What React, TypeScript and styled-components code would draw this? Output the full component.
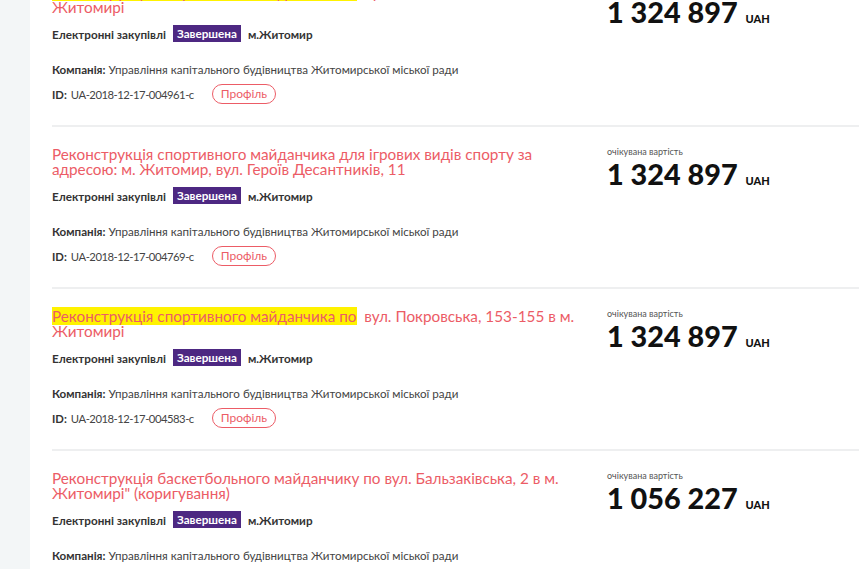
import React from "react";
import styled, { createGlobalStyle } from "styled-components";

const Global = createGlobalStyle`
  html, body { margin: 0; padding: 0; background: #ffffff; overflow: hidden; }
  body { font-family: Lato, "Open Sans", Arial, sans-serif; color: #333; }
`;

const Page = styled.div`
  display: flex;
  height: 569px;
  overflow: hidden;
`;

const Side = styled.div`
  width: 30px;
  flex: none;
  background: #f3f6f7;
`;

const Main = styled.div`
  flex: 1;
  background: #fff;
  padding-left: 22px;
`;

const List = styled.div`
  margin-top: -35px;
`;

const Card = styled.div`
  display: flex;
  border-bottom: 2px solid #eeeff0;
  padding: 20px 0 21px;
`;

const Left = styled.div`
  width: 533px;
  flex: none;
  display: flex;
  flex-direction: column;
`;

const Title = styled.a`
  font-size: 15.3px;
  line-height: 15px;
  color: #ec5c66;
  text-decoration: none;
  white-space: pre-wrap;
`;

const Mark = styled.span`
  background: #fff200;
`;

const Meta = styled.div`
  display: flex;
  align-items: center;
  gap: 7px;
  margin-top: 10px;
  height: 17px;
  font-size: 11.7px;
  font-weight: 700;
  color: #333;
`;

const Badge = styled.span`
  background: #4d2882;
  color: #fff;
  height: 17px;
  line-height: 17px;
  padding: 0 4px;
`;

const Company = styled.div`
  margin-top: 21px;
  font-size: 11.6px;
  line-height: 14px;
  color: #444;
  b { color: #333; }
`;

const IdRow = styled.div`
  display: flex;
  align-items: center;
  margin-top: 7px;
  height: 20px;
  font-size: 11.3px;
  color: #444;
  b { color: #333; margin-right: 4px; }
`;

const IdValue = styled.span`
  letter-spacing: -0.5px;
`;

const Pill = styled.span`
  margin-left: 18px;
  height: 18px;
  line-height: 18px;
  padding: 0 8px;
  border: 1px solid #ec5c66;
  border-radius: 10px;
  color: #ec5c66;
  font-size: 12px;
`;

const Right = styled.div`
  margin-left: 22px;
  display: flex;
  flex-direction: column;
`;

const Label = styled.div`
  font-size: 9px;
  line-height: 12px;
  color: #555;
  margin-top: -1px;
`;

const Price = styled.div`
  margin-top: 1px;
  display: flex;
  align-items: baseline;
  gap: 8px;
  line-height: 30px;
`;

const Amount = styled.span`
  font-size: 28.8px;
  font-weight: 900;
  color: #111;
`;

const Cur = styled.span`
  font-size: 11px;
  font-weight: 900;
  color: #111;
`;

type Item = {
  mark?: string;
  title: string;
  id: string;
  price: string;
};

const items: Item[] = [
  {
    mark: "Реконструкція спортивного майданчика по",
    title: "  вул. Космонавтів, 14 в м. Житомирі",
    id: "UA-2018-12-17-004961-c",
    price: "1 324 897",
  },
  {
    title:
      "Реконструкція спортивного майданчика для ігрових видів спорту за адресою: м. Житомир, вул. Героїв Десантників, 11",
    id: "UA-2018-12-17-004769-c",
    price: "1 324 897",
  },
  {
    mark: "Реконструкція спортивного майданчика по",
    title: "  вул. Покровська, 153-155 в м. Житомирі",
    id: "UA-2018-12-17-004583-c",
    price: "1 324 897",
  },
  {
    title:
      "Реконструкція баскетбольного майданчику по вул. Бальзаківська, 2 в м. Житомирі\" (коригування)",
    id: "UA-2018-12-17-004229-c",
    price: "1 056 227",
  },
];

export default function App() {
  return (
    <>
      <Global />
      <Page>
        <Side />
        <Main>
          <List>
            {items.map((it, i) => (
              <Card key={i}>
                <Left>
                  <Title href="#">
                    {it.mark && <Mark>{it.mark}</Mark>}
                    {it.title}
                  </Title>
                  <Meta>
                    <span>Електронні закупівлі</span>
                    <Badge>Завершена</Badge>
                    <span>м.Житомир</span>
                  </Meta>
                  <Company>
                    <b>Компанія:</b> Управління капітального будівництва Житомирської міської ради
                  </Company>
                  <IdRow>
                    <b>ID:</b>
                    <IdValue>{it.id}</IdValue>
                    <Pill>Профіль</Pill>
                  </IdRow>
                </Left>
                <Right>
                  <Label>очікувана вартість</Label>
                  <Price>
                    <Amount>{it.price}</Amount>
                    <Cur>UAH</Cur>
                  </Price>
                </Right>
              </Card>
            ))}
          </List>
        </Main>
      </Page>
    </>
  );
}
